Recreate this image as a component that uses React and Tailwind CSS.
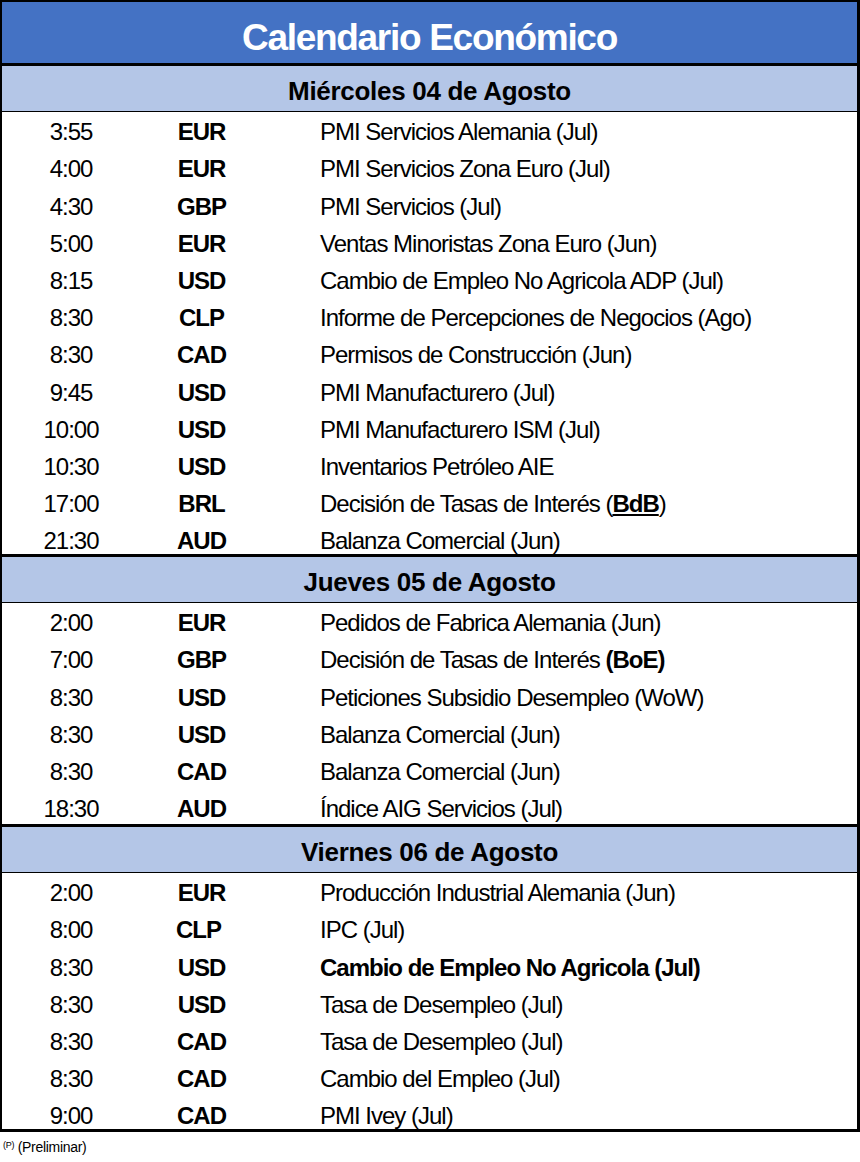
// Days of the week with their events
const sections = [
  {
    day: "Miércoles 04 de Agosto",
    bodyHeight: "h-[442px]",
    rows: [
      ["3:55", "EUR", "PMI Servicios Alemania (Jul)"],
      ["4:00", "EUR", "PMI Servicios Zona Euro (Jul)"],
      ["4:30", "GBP", "PMI Servicios (Jul)"],
      ["5:00", "EUR", "Ventas Minoristas Zona Euro (Jun)"],
      ["8:15", "USD", "Cambio de Empleo No Agricola ADP (Jul)"],
      ["8:30", "CLP", "Informe de Percepciones de Negocios (Ago)"],
      ["8:30", "CAD", "Permisos de Construcción (Jun)"],
      ["9:45", "USD", "PMI Manufacturero (Jul)"],
      ["10:00", "USD", "PMI Manufacturero ISM (Jul)"],
      ["10:30", "USD", "Inventarios Petróleo AIE"],
      [
        "17:00",
        "BRL",
        <>
          Decisión de Tasas de Interés (<span className="font-bold underline underline-offset-2">BdB</span>)
        </>,
      ],
      ["21:30", "AUD", "Balanza Comercial (Jun)"],
    ],
  },
  {
    day: "Jueves 05 de Agosto",
    bodyHeight: "h-[221px]",
    rows: [
      ["2:00", "EUR", "Pedidos de Fabrica Alemania (Jun)"],
      [
        "7:00",
        "GBP",
        <>
          Decisión de Tasas de Interés <span className="font-bold">(BoE)</span>
        </>,
      ],
      ["8:30", "USD", "Peticiones Subsidio Desempleo (WoW)"],
      ["8:30", "USD", "Balanza Comercial (Jun)"],
      ["8:30", "CAD", "Balanza Comercial (Jun)"],
      ["18:30", "AUD", "Índice AIG Servicios (Jul)"],
    ],
  },
  {
    day: "Viernes 06 de Agosto",
    bodyHeight: "h-[256px]",
    rows: [
      ["2:00", "EUR", "Producción Industrial Alemania (Jun)"],
      ["8:00", "CLP", "IPC (Jul)", true],
      ["8:30", "USD", <span className="font-bold">Cambio de Empleo No Agricola (Jul)</span>],
      ["8:30", "USD", "Tasa de Desempleo (Jul)"],
      ["8:30", "CAD", "Tasa de Desempleo (Jul)"],
      ["8:30", "CAD", "Cambio del Empleo (Jul)"],
      ["9:00", "CAD", "PMI Ivey (Jul)"],
    ],
  },
];

const App = () => {
  return (
    <div className="w-[860px] h-[1162px] bg-white text-black font-['Liberation_Sans',Arial,sans-serif]">
      <div className="w-[860px] border-t-2 border-l-2 border-r-[3px] border-b-[3px] border-black">
        {/* Title */}
        <div className="h-[61px] bg-[#4472C4] flex items-center justify-center pt-[9px]">
          <h1 className="text-[37px] leading-none font-bold text-white tracking-[-1.3px]">
            Calendario Económico
          </h1>
        </div>

        {sections.map((section) => (
          <div key={section.day} className="border-t-[3px] border-black">
            <div className="h-[46px] bg-[#B4C6E7] border-b border-black flex items-center justify-center pt-[4px]">
              <h2 className="text-[26px] leading-none font-bold tracking-[-0.3px]">
                {section.day}
              </h2>
            </div>
            <div className={`${section.bodyHeight} overflow-hidden`}>
              {section.rows.map(([time, ccy, desc, shift], i) => (
                <div
                  key={i}
                  className="h-[37.2px] pt-[8.3px] flex items-start text-[24px] leading-none tracking-[-1px]"
                >
                  <div className="w-[138px] text-center">{time}</div>
                  <div className={`w-[123px] text-center font-bold ${shift ? "pr-[6px]" : ""}`}>
                    {ccy}
                  </div>
                  <div className="pl-[57px] whitespace-nowrap">{desc}</div>
                </div>
              ))}
            </div>
          </div>
        ))}
      </div>

      {/* Footnote */}
      <p className="pl-[3px] pt-[8px] text-[14px] leading-none tracking-[-0.3px]">
        <sup className="text-[9px]">(P)</sup> (Preliminar)
      </p>
    </div>
  );
};

export default App;
